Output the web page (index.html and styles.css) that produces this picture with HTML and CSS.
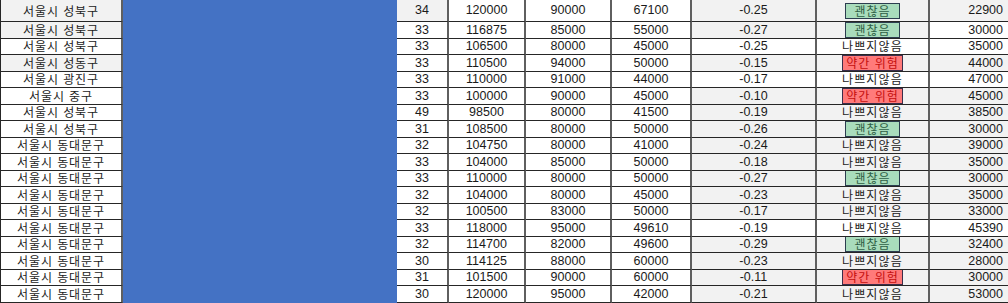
FILE: index.html
```html
<!DOCTYPE html>
<html lang="ko">
<head>
<meta charset="utf-8">
<title>Sheet</title>
<link rel="stylesheet" href="styles.css">
</head>
<body>
<div class="sheet">
  <div class="blue"></div>

  <div class="c k g">서울시 성북구</div><div class="c g">34</div><div class="c">120000</div><div class="c">90000</div><div class="c">67100</div><div class="c g">-0.25</div><div class="c g"><span class="badge ok">괜찮음</span></div><div class="c r g">22900</div>
  <div class="c k g">서울시 성북구</div><div class="c">33</div><div class="c">116875</div><div class="c">85000</div><div class="c">55000</div><div class="c g">-0.27</div><div class="c g"><span class="badge ok">괜찮음</span></div><div class="c r">30000</div>
  <div class="c k">서울시 성북구</div><div class="c">33</div><div class="c">106500</div><div class="c">80000</div><div class="c">45000</div><div class="c">-0.25</div><div class="c"><span class="kt">나쁘지않음</span></div><div class="c r">35000</div>
  <div class="c k g">서울시 성동구</div><div class="c">33</div><div class="c">110500</div><div class="c">94000</div><div class="c">50000</div><div class="c g">-0.15</div><div class="c g"><span class="badge warn">약간 위험</span></div><div class="c r g">44000</div>
  <div class="c k">서울시 광진구</div><div class="c">33</div><div class="c">110000</div><div class="c">91000</div><div class="c">44000</div><div class="c">-0.17</div><div class="c"><span class="kt">나쁘지않음</span></div><div class="c r">47000</div>
  <div class="c k">서울시 중구</div><div class="c">33</div><div class="c">100000</div><div class="c">90000</div><div class="c">45000</div><div class="c g">-0.10</div><div class="c g"><span class="badge warn">약간 위험</span></div><div class="c r g">45000</div>
  <div class="c k">서울시 성북구</div><div class="c">49</div><div class="c">98500</div><div class="c">80000</div><div class="c">41500</div><div class="c g">-0.19</div><div class="c g"><span class="kt">나쁘지않음</span></div><div class="c r g">38500</div>
  <div class="c k">서울시 성북구</div><div class="c">31</div><div class="c">108500</div><div class="c">80000</div><div class="c">50000</div><div class="c g">-0.26</div><div class="c g"><span class="badge ok">괜찮음</span></div><div class="c r g">30000</div>
  <div class="c k">서울시 동대문구</div><div class="c">32</div><div class="c">104750</div><div class="c">80000</div><div class="c">41000</div><div class="c g">-0.24</div><div class="c g"><span class="kt">나쁘지않음</span></div><div class="c r g">39000</div>
  <div class="c k">서울시 동대문구</div><div class="c">33</div><div class="c">104000</div><div class="c">85000</div><div class="c">50000</div><div class="c g">-0.18</div><div class="c g"><span class="kt">나쁘지않음</span></div><div class="c r g">35000</div>
  <div class="c k">서울시 동대문구</div><div class="c">33</div><div class="c">110000</div><div class="c">80000</div><div class="c">50000</div><div class="c g">-0.27</div><div class="c g"><span class="badge ok">괜찮음</span></div><div class="c r g">30000</div>
  <div class="c k">서울시 동대문구</div><div class="c">32</div><div class="c">104000</div><div class="c">80000</div><div class="c">45000</div><div class="c g">-0.23</div><div class="c g"><span class="kt">나쁘지않음</span></div><div class="c r g">35000</div>
  <div class="c k">서울시 동대문구</div><div class="c">32</div><div class="c">100500</div><div class="c">83000</div><div class="c">50000</div><div class="c g">-0.17</div><div class="c g"><span class="kt">나쁘지않음</span></div><div class="c r g">33000</div>
  <div class="c k">서울시 동대문구</div><div class="c">33</div><div class="c">118000</div><div class="c">95000</div><div class="c">49610</div><div class="c">-0.19</div><div class="c"><span class="kt">나쁘지않음</span></div><div class="c r">45390</div>
  <div class="c k">서울시 동대문구</div><div class="c">32</div><div class="c">114700</div><div class="c">82000</div><div class="c">49600</div><div class="c g">-0.29</div><div class="c g"><span class="badge ok">괜찮음</span></div><div class="c r g">32400</div>
  <div class="c k">서울시 동대문구</div><div class="c">30</div><div class="c">114125</div><div class="c">88000</div><div class="c">60000</div><div class="c g">-0.23</div><div class="c g"><span class="kt">나쁘지않음</span></div><div class="c r g">28000</div>
  <div class="c k">서울시 동대문구</div><div class="c">31</div><div class="c">101500</div><div class="c">90000</div><div class="c">60000</div><div class="c g">-0.11</div><div class="c g"><span class="badge warn">약간 위험</span></div><div class="c r g">30000</div>
  <div class="c k">서울시 동대문구</div><div class="c">30</div><div class="c">120000</div><div class="c">95000</div><div class="c">42000</div><div class="c g">-0.21</div><div class="c g"><span class="kt">나쁘지않음</span></div><div class="c r g">53000</div>
</div>
</body>
</html>
```

FILE: styles.css
```css
html, body {
  margin: 0;
  padding: 0;
  background: #ffffff;
  overflow: hidden;
}

.sheet {
  display: grid;
  width: 1012px;
  grid-template-columns: 123px 274px 52px 77px 86px 80px 125px 113px 82px;
  grid-template-rows: 22px repeat(17, 16.5px);
  font-family: "Liberation Sans", Arial, sans-serif;
  font-size: 12.5px;
  color: #1a1a1a;
}

.blue {
  grid-column: 2;
  grid-row: 1 / -1;
  background: #4472c4;
}

.c {
  display: flex;
  align-items: center;
  justify-content: center;
  box-sizing: border-box;
  border-right: 2px solid #5f5f5f;
  border-bottom: 1px solid #262626;
  background: #ffffff;
  white-space: nowrap;
  overflow: hidden;
  line-height: 1;
}

.c.g {
  background: #f2f2f2;
}

.c.k {
  border-left: 1px solid #262626;
  font-family: "Noto Sans CJK KR", "Liberation Sans", sans-serif;
  font-size: 12px;
  letter-spacing: 0.9px;
  color: #222222;
}

.c.r {
  justify-content: flex-end;
  padding-right: 9px;
  border-right: none;
}

.kt {
  font-family: "Noto Sans CJK KR", sans-serif;
  font-size: 12px;
  letter-spacing: 1.2px;
  color: #222222;
}

.badge {
  display: flex;
  align-items: center;
  justify-content: center;
  box-sizing: border-box;
  height: 16px;
  font-family: "Noto Sans CJK KR", sans-serif;
  font-size: 12px;
  letter-spacing: 1px;
}

.badge.ok {
  width: 55px;
  background: #a9dcbc;
  border: 1px solid #2c3d4f;
  color: #2f5f45;
}

.badge.warn {
  width: 61px;
  background: #ff7a7a;
  border: 1px solid #3b2d4a;
  color: #c40f0f;
}
```
